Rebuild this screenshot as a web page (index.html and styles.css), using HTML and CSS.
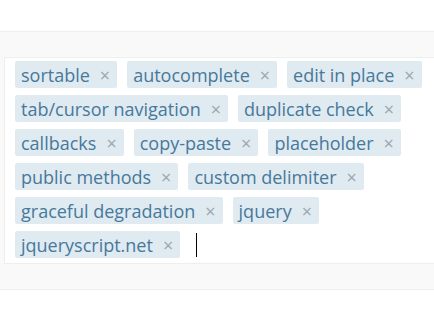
FILE: index.html
```html
<!DOCTYPE html>
<html lang="en">

<head>
    <meta charset="UTF-8">
    <meta name="viewport" content="width=device-width, initial-scale=1.0">
    <title>Tag Editor</title>
    <link rel="stylesheet" href="styles.css">
</head>

<body>
    <div class="demo">
        <ul class="tag-editor">
            <li class="tag"><span class="tag-text">sortable</span><i class="tag-delete">×</i></li>
            <li class="tag"><span class="tag-text">autocomplete</span><i class="tag-delete">×</i></li>
            <li class="tag"><span class="tag-text">edit in place</span><i class="tag-delete">×</i></li>
            <li class="tag"><span class="tag-text">tab/cursor navigation</span><i class="tag-delete">×</i></li>
            <li class="tag"><span class="tag-text">duplicate check</span><i class="tag-delete">×</i></li>
            <li class="tag"><span class="tag-text">callbacks</span><i class="tag-delete">×</i></li>
            <li class="tag"><span class="tag-text">copy-paste</span><i class="tag-delete">×</i></li>
            <li class="tag"><span class="tag-text">placeholder</span><i class="tag-delete">×</i></li>
            <li class="tag"><span class="tag-text">public methods</span><i class="tag-delete">×</i></li>
            <li class="tag"><span class="tag-text">custom delimiter</span><i class="tag-delete">×</i></li>
            <li class="tag"><span class="tag-text">graceful degradation</span><i class="tag-delete">×</i></li>
            <li class="tag"><span class="tag-text">jquery</span><i class="tag-delete">×</i></li>
            <li class="tag"><span class="tag-text">jqueryscript.net</span><i class="tag-delete">×</i></li>
            <li class="tag-input"><span class="caret"></span></li>
        </ul>
    </div>
</body>

</html>
```

FILE: styles.css
```css
body {
    margin: 0;
    padding: 0;
    background-color: #fff;
    font-family: "Open Sans", Arial, sans-serif;
}

.demo {
    margin-top: 31px;
    padding: 25px 0 25px 4px;
    background-color: #f9f9f9;
    border-top: 1px solid #eee;
    border-bottom: 1px solid #eee;
}

/* the box runs on past the right edge of the window */
.tag-editor {
    list-style: none;
    margin: 0;
    padding: 3px 0 5px 10px;
    background-color: #fff;
    border: 1px solid #eee;
    border-right: none;
    display: flex;
    flex-wrap: wrap;
    gap: 7px 10px;
}

.tag {
    display: flex;
    align-items: center;
    height: 27px;
    padding: 0 7px 0 6px;
    background-color: #e0eaf1;
    border-radius: 2px;
    color: #46799b;
    font-size: 18px;
    white-space: nowrap;
}

.tag-delete {
    margin-left: 10px;
    font-style: normal;
    font-size: 18px;
    color: #9ea6ad;
}

.tag-input {
    display: flex;
    align-items: center;
    height: 27px;
    padding-left: 6px;
}

.caret {
    display: block;
    width: 1px;
    height: 24px;
    background-color: #000;
}
```
